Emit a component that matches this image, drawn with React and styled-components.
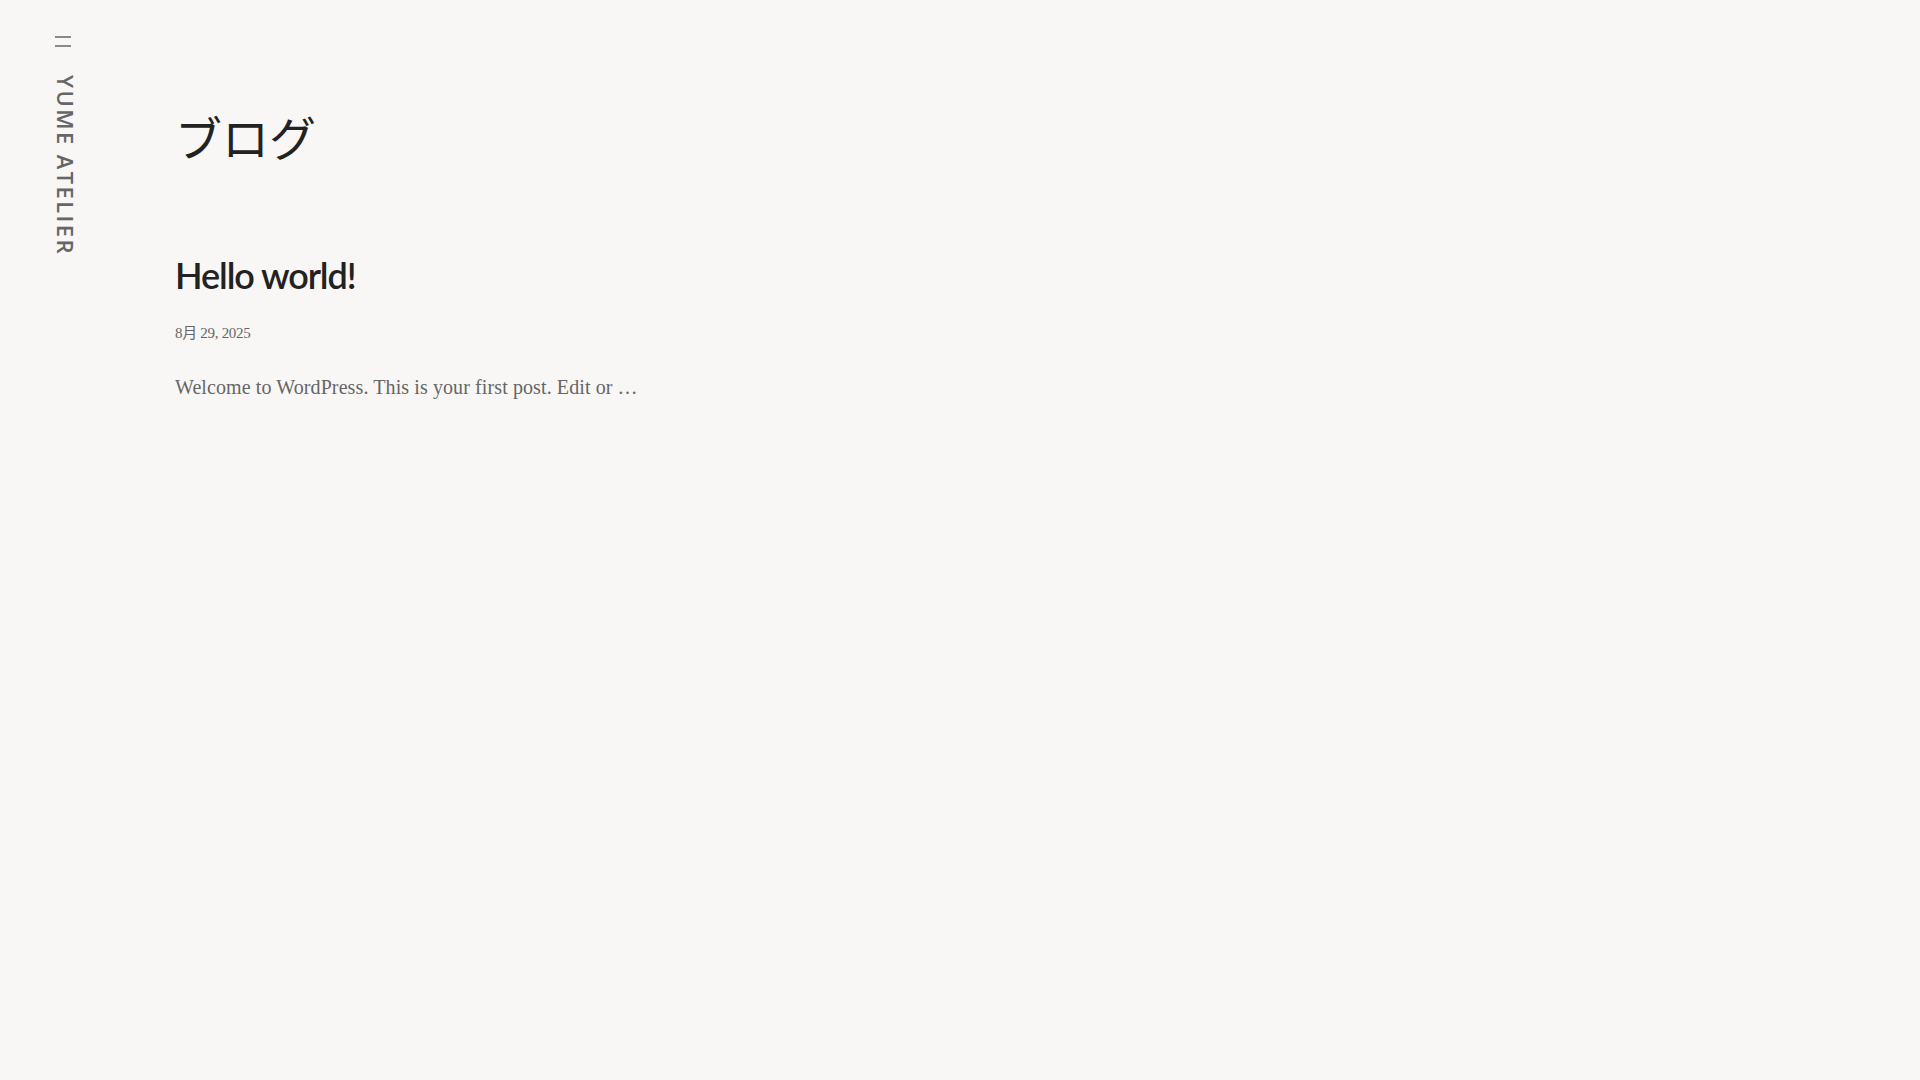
import React from "react";
import styled, { createGlobalStyle } from "styled-components";

const GlobalStyle = createGlobalStyle`
  html, body {
    margin: 0;
    padding: 0;
    background: #f8f7f5;
  }
  body {
    font-family: "Liberation Serif", "Noto Sans CJK JP", serif;
    color: #222;
  }
`;

const Page = styled.div`
  display: flex;
  min-height: 100vh;
  background: #f8f7f5;
`;

const Sidebar = styled.aside`
  width: 175px;
  flex-shrink: 0;
  padding: 36px 0 0 55px;
  box-sizing: border-box;
  display: flex;
  flex-direction: column;
  align-items: flex-start;
  gap: 28px;
`;

const MenuButton = styled.button`
  padding: 0;
  border: 0;
  background: none;
  line-height: 0;
  color: #666;
  cursor: pointer;
`;

const SiteTitle = styled.a`
  writing-mode: vertical-rl;
  font-family: "Open Sans", "Noto Sans", sans-serif;
  font-weight: 600;
  font-size: 22px;
  letter-spacing: 0.11em;
  line-height: 1;
  color: #666;
  text-decoration: none;
`;

const Main = styled.main`
  flex: 1;
  padding-top: 108px;
`;

const PageTitle = styled.h1`
  margin: 0 0 92px;
  font-family: "Noto Sans CJK JP", sans-serif;
  font-weight: 400;
  font-size: 47px;
  line-height: 1.2;
  color: #222;
`;

const Post = styled.article`
  display: flex;
  flex-direction: column;
`;

const PostTitle = styled.h2`
  margin: 0 0 25px;
  font-family: "Lato", "Noto Sans", sans-serif;
  font-weight: 600;
  font-size: 36px;
  letter-spacing: -0.03em;
  line-height: 1.1;
  color: #222;
`;

const PostDate = styled.time`
  font-family: "Liberation Serif", "Noto Sans CJK JP", serif;
  font-size: 15px;
  letter-spacing: -0.02em;
  color: #666;
  margin-bottom: 34px;
`;

const Excerpt = styled.p`
  margin: 0;
  font-family: "Liberation Serif", serif;
  font-size: 20px;
  letter-spacing: 0.005em;
  color: #666;
`;

export default function App() {
  return (
    <>
      <GlobalStyle />
      <Page>
        <Sidebar>
          <MenuButton aria-label="Menu">
            <svg width="16" height="11" viewBox="0 0 16 11" fill="none">
              <path d="M0 1H16M0 10H16" stroke="currentColor" strokeWidth="1.5" />
            </svg>
          </MenuButton>
          <SiteTitle href="#">YUME ATELIER</SiteTitle>
        </Sidebar>
        <Main>
          <PageTitle>ブログ</PageTitle>
          <Post>
            <PostTitle>Hello world!</PostTitle>
            <PostDate>8月 29, 2025</PostDate>
            <Excerpt>Welcome to WordPress. This is your first post. Edit or …</Excerpt>
          </Post>
        </Main>
      </Page>
    </>
  );
}
